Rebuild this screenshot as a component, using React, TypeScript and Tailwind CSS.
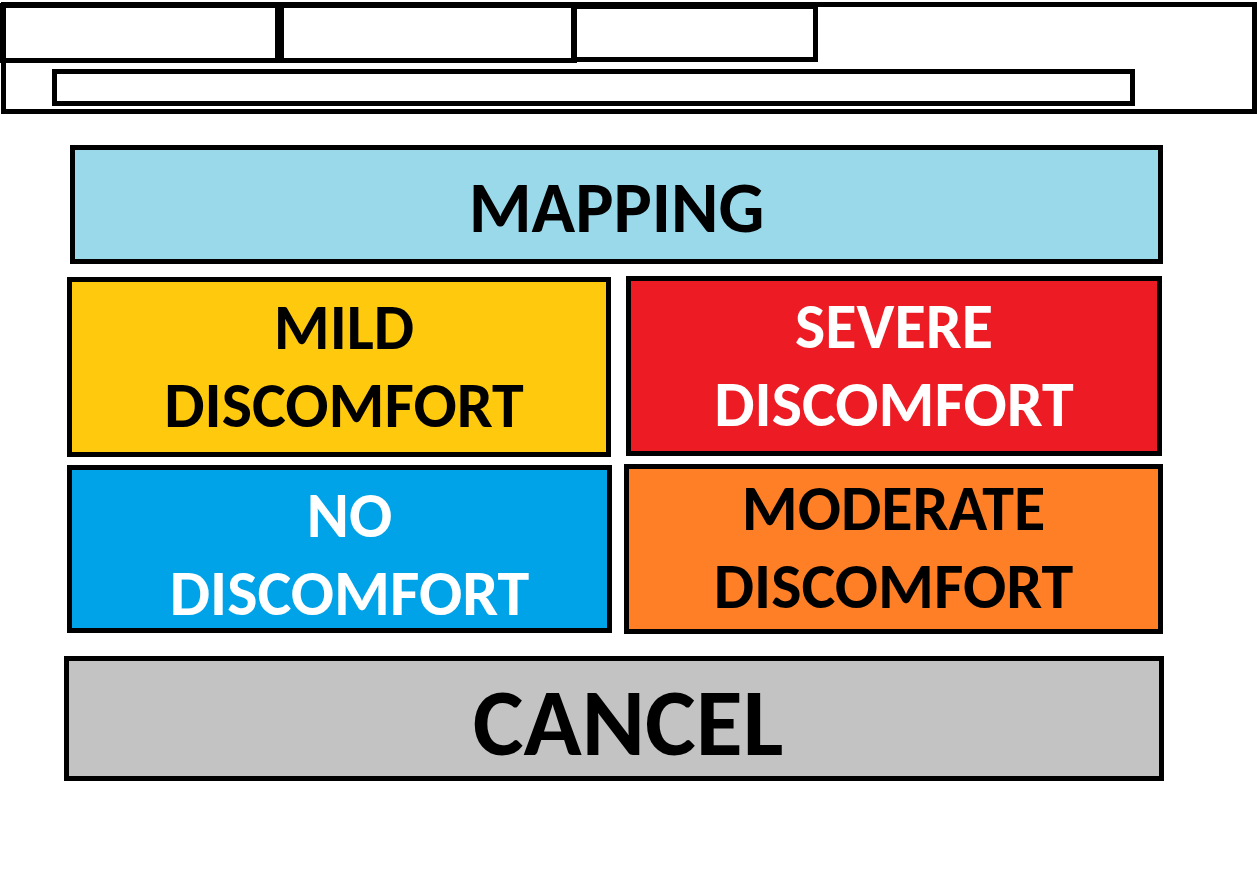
import type { ReactNode } from "react";

type ActionProps = { className: string; children: ReactNode };

function Action({ className, children }: ActionProps) {
  return (
    <button
      type="button"
      className={`flex w-full items-start justify-center border-5 border-black text-center font-bold ${className}`}
    >
      {children}
    </button>
  );
}

export default function App() {
  return (
    <div className="min-h-screen bg-white pt-0.5 font-['Carlito','Calibri','Lato',sans-serif] text-black">
      <header className="ml-px border-5 border-black pb-[3px]">
        <nav
          aria-label="Sections"
          className="-mt-1 -ml-1.5 grid w-[818px] max-w-full grid-cols-[279fr_298fr_241fr] items-start"
        >
          <button type="button" aria-label="Section 1" className="h-15 border-5 border-r-4 border-l-6 border-black" />
          <button type="button" aria-label="Section 2" className="h-15 border-5 border-r-6 border-black" />
          <button type="button" aria-label="Section 3" className="mt-px h-[58px] border-5 border-l-0 border-black" />
        </nav>
        <input
          type="text"
          aria-label="Address"
          className="mt-1.5 mr-[117px] ml-[46px] block h-[37px] w-[calc(100%-163px)] border-5 border-black px-2 text-lg outline-none"
        />
      </header>

      <main className="pt-[31px] pr-[93px] pl-16">
        <div className="pr-px pl-1.5">
          <Action className="bg-[#99d9ea] pt-4.5 pb-3 text-[72px] leading-[79px]">MAPPING</Action>
        </div>

        <div className="mt-3 grid grid-cols-[545fr_539fr] items-start gap-3 pr-px pl-[3px]">
          <div className="flex flex-col gap-2 pt-px">
            <div className="pr-px">
              <Action className="bg-[#ffc90e] pt-1.5 pb-2 pl-2.5 text-[64px] leading-[78px]">
                MILD
                <br />
                DISCOMFORT
              </Action>
            </div>
            <Action className="h-42 bg-[#00a2e8] pt-1.5 pl-5 text-[64px] leading-[78px] text-white">
              NO
              <br />
              DISCOMFORT
            </Action>
          </div>
          <div className="flex flex-col gap-2">
            <div className="pr-px pl-0.5">
              <Action className="bg-[#ed1c24] pt-1.5 pb-2 text-[64px] leading-[78px] text-white">
                SEVERE
                <br />
                DISCOMFORT
              </Action>
            </div>
            <Action className="bg-[#ff7f27] pb-1 text-[64px] leading-[78px]">
              MODERATE
              <br />
              DISCOMFORT
            </Action>
          </div>
        </div>

        <Action className="mt-[22px] bg-[#c3c3c3] pt-4 pb-2 pl-7 text-[96px] leading-[91px]">CANCEL</Action>
      </main>
    </div>
  );
}
